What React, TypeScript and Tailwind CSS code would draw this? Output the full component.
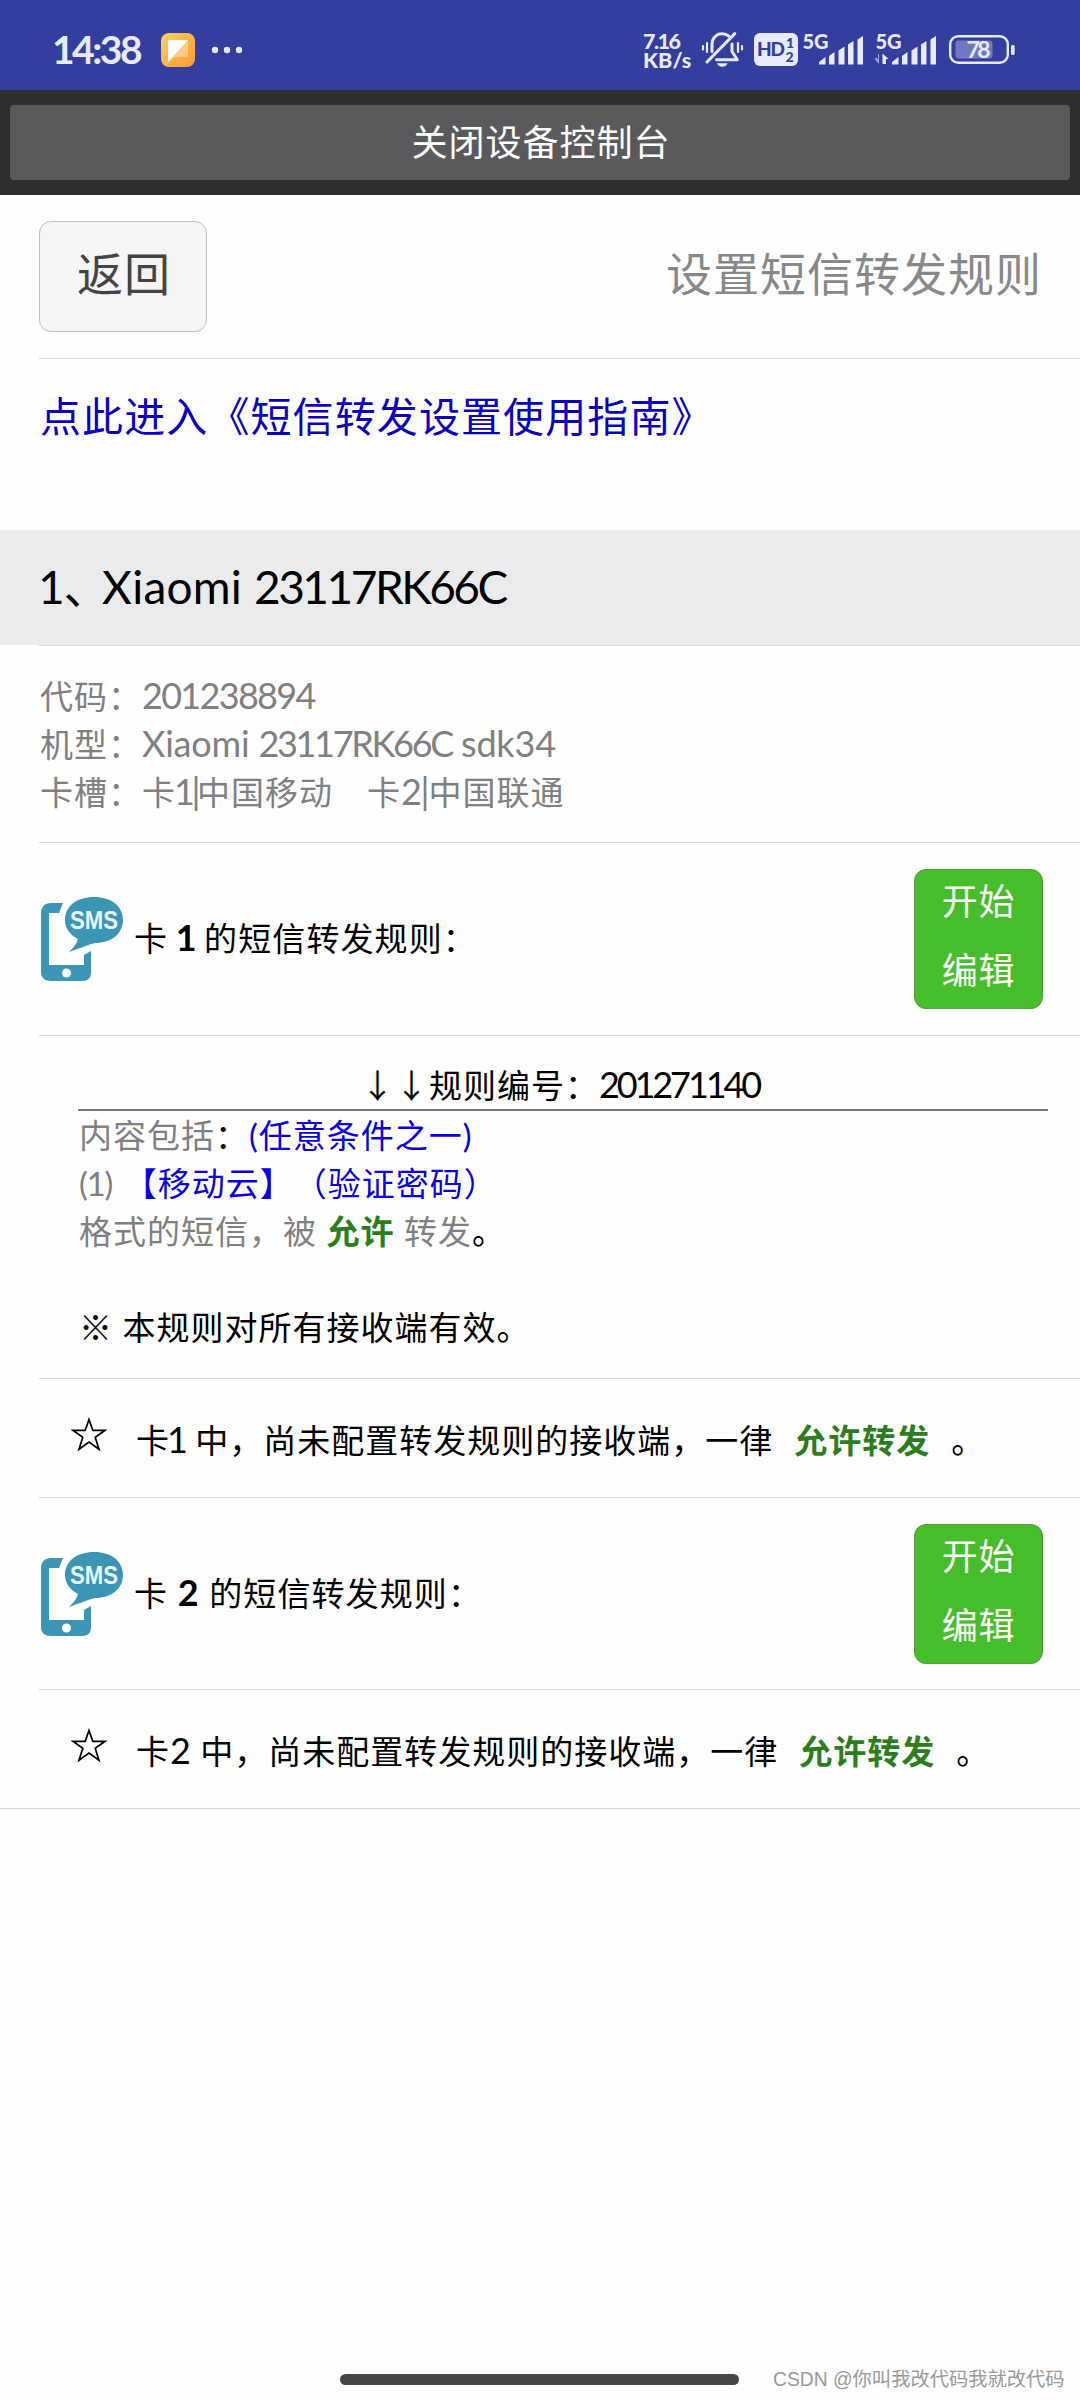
import React from 'react';

const BellOffIcon = () => (
  <svg width="43" height="38" viewBox="0 0 43 38" fill="none" stroke="#e6eafc" strokeWidth="3" strokeLinecap="round" strokeLinejoin="round">
    <path d="M11 20.5V13.5C11 7 15.5 2.8 21 2.8C23.6 2.8 26 3.6 27.8 5.2" />
    <path d="M33.8 2.6L6 31" />
    <path d="M31 13V20.5L36.3 28.8H15.5" />
    <path d="M2 15V18.5M6 12V21M37 12V21M41 15V18.5" strokeWidth="2.2" />
    <path d="M15.8 32.2H26.6C25.6 34.6 23.6 35.8 21.2 35.8C18.8 35.8 16.8 34.6 15.8 32.2Z" fill="#e6eafc" stroke="none" />
  </svg>
);

const HdIcon = () => (
  <svg width="44" height="33" viewBox="0 0 44 33">
    <rect width="44" height="33" rx="6" fill="#e6eafc" />
    <g fill="#343e9f" fontFamily="Lato, sans-serif" fontWeight="900">
      <text x="3" y="23" fontSize="19" textLength="28">HD</text>
      <text x="32" y="14.5" fontSize="14">1</text>
      <text x="31.5" y="29" fontSize="14">2</text>
    </g>
  </svg>
);

const SignalIcon = ({ active = false }: { active?: boolean }) => (
  <svg className="overflow-visible" width="62" height="32" viewBox="0 0 62 32" fill="#e6eafc">
    <text x="0.5" y="14.5" fontSize="20" fontFamily="Lato, sans-serif" fontWeight="900" textLength="26">5G</text>
    {active && (
      <>
        <path d="M4 20V30L-0.5 24.5L1 23.5L3 25.5V20Z" opacity=".6" />
        <path d="M7.5 19.5L13.5 25H11V30H7.5Z" />
      </>
    )}
    <path d="M17 30.5V28L23.5 23V30.5ZM27 30.5V22L32.5 18V30.5ZM36.5 30.5V16.5L42.5 12.5V30.5ZM46 30.5V10.5L51.5 7V30.5ZM55.5 30.5V5.5L61 2V30.5Z" />
  </svg>
);

const BatteryIcon = () => (
  <svg width="66" height="30" viewBox="0 0 66 30">
    <rect x="1.2" y="1.2" width="57.6" height="26.6" rx="8" fill="none" stroke="#e6eafc" strokeWidth="2.4" />
    <rect x="6.5" y="5.5" width="37" height="18" rx="3" fill="#7078c0" />
    <rect x="62" y="10" width="3.6" height="10" rx="1.5" fill="#e6eafc" />
    <text x="17.5" y="23" fontSize="23" fontFamily="Lato, sans-serif" fontWeight="700" fill="#e6eafc" textLength="24">78</text>
  </svg>
);

const SmsIcon = () => (
  <svg className="overflow-visible" width="82" height="84" viewBox="0 0 82 84">
    <path d="M10 6H22L18 16H8V68H43V58L50 54V75C50 81 47 84 41 84H10C4 84 0 81 0 75V16C0 10 4 6 10 6Z" fill="#3b96b5" />
    <circle cx="25.5" cy="76" r="4.5" fill="#fff" />
    <path d="M53 0C70 0 82 9 82 23C82 37 70 46 54 46C46 48 37 52 28 55C33 50 36 46 37 42C29 38 24 31 24 23C24 9 36 0 53 0Z" fill="#3b96b5" />
    <text x="29" y="32" fontSize="26" fontFamily="Liberation Sans, sans-serif" fontWeight="700" fill="#e8f6fb" textLength="48" lengthAdjust="spacingAndGlyphs">SMS</text>
  </svg>
);

const StarIcon = () => (
  <svg width="36" height="35" viewBox="0 0 36 35" fill="none" stroke="#000" strokeWidth="1.7">
    <path d="M18 2.5L21.8 13.3H34L24.2 20.3L28 32.3L18 25L8 32.3L11.8 20.3L2 13.3H14.2Z" />
  </svg>
);

const StatusBar = () => (
  <div className="flex h-[90px] items-start bg-[#343e9f] pl-[52px] text-[#e6eafc]">
    <span className="mt-[25px] w-[109px] text-[39px] leading-[48px] font-bold tracking-[-2.5px]">14:38</span>
    <svg className="mt-[33px]" width="34" height="34" viewBox="0 0 34 34">
      <defs>
        <linearGradient id="note" x1="0" y1="0" x2="1" y2="1">
          <stop offset="0" stopColor="#fbd063" />
          <stop offset="1" stopColor="#fb9a35" />
        </linearGradient>
      </defs>
      <rect width="34" height="34" rx="8" fill="url(#note)" />
      <path d="M7 7H27V24H13L7 29Z" fill="#fff" opacity=".35" />
      <path d="M7 7H27L7 29Z" fill="#fff" />
    </svg>
    <svg className="mt-[45px] ml-4" width="32" height="10" viewBox="0 0 32 10" fill="#e6eafc">
      <circle cx="4" cy="5" r="3.2" />
      <circle cx="16" cy="5" r="3.2" />
      <circle cx="28" cy="5" r="3.2" />
    </svg>
    <div className="mt-[32px] ml-[400px] w-[58px] text-[21.5px] leading-[18.5px] font-black">
      <div className="tracking-[-1.5px]">7.16</div>
      <div className="tracking-[0.1px]">KB/s</div>
    </div>
    <div className="mt-[31px] w-[53px]"><BellOffIcon /></div>
    <div className="mt-[33px] w-[48px]"><HdIcon /></div>
    <div className="mt-[34px] w-[73px]"><SignalIcon /></div>
    <div className="mt-[34px] w-[74px]"><SignalIcon active /></div>
    <div className="mt-[35px]"><BatteryIcon /></div>
  </div>
);

const CardHeader = ({ slot }: { slot: number }) => (
  <div className="flex h-full items-center pl-0.5">
    <SmsIcon />
    <div className="-mt-1 ml-[11px] flex-1 text-[33px] tracking-[1.1px]">
      卡 <b className={slot === 1 ? '-ml-0.5 text-[36px] tracking-[-2px]' : 'text-[36px]'}>{slot}</b> 的短信转发规则：
    </div>
    <button className="mr-[37px] h-[140px] w-[129px] rounded-xl border border-[#4c9f30] bg-[#46bd2b] pb-3 text-[36px] leading-[69px] tracking-[0.8px] text-white">
      <span className="-mt-[3px] block">
        开始
        <br />
        编辑
      </span>
    </button>
  </div>
);

const DefaultRule = ({ slot }: { slot: number }) => (
  <div className="flex h-full items-center pl-8 text-[33px] tracking-[1px] whitespace-pre">
    <div className="-mt-2"><StarIcon /></div>
    <div className="ml-[29px] pt-0.5">
      卡<span className={slot === 1 ? '-ml-[3px] text-[36px] tracking-[-2px]' : 'text-[36px] tracking-[0px]'}>{slot}</span> 中，尚未配置转发规则的接收端，一律
      <b className="mx-[21px] text-[#2c7d1c]">允许转发</b>。
    </div>
  </div>
);

const App: React.FC = () => {
  return (
    <div className="flex h-[2400px] w-[1080px] flex-col overflow-hidden bg-[#fefefe] font-['Lato','Noto_Sans_CJK_SC',sans-serif] text-black [text-spacing-trim:space-all]">
      <StatusBar />
      <div className="h-[105px] bg-[#2e2e2e] px-2.5 py-[15px]">
        <div className="flex h-[75px] items-center justify-center rounded bg-[#5a5a5c] pb-0.5 pl-0.5 text-[36px] tracking-[1px] text-white">
          关闭设备控制台
        </div>
      </div>

      <div className="ml-[39px] flex h-[164px] items-center justify-between border-b border-[#d9d9db] pr-[38px]">
        <button className="h-[111px] w-[168px] rounded-xl border border-[#c0c0c2] bg-[#f5f5f5] pb-1.5 pl-0.5 text-[46px] tracking-[1px] text-[#444]">返回</button>
        <h1 className="pb-1.5 text-[46px] tracking-[1px] text-[#888]">设置短信转发规则</h1>
      </div>

      <a className="ml-[39px] h-[171px] pt-[27px] pl-px text-[41px] leading-[62px] tracking-[1.1px] text-[#0a00bd]">
        点此进入《短信转发设置使用指南》
      </a>

      <div className="h-[115px] bg-[#eaebed] pt-[24px] pl-[38px] text-[46px] leading-[66px] tracking-[-1.3px]">
        1、<span className="-ml-[6px] tracking-[0.2px]">Xiaomi </span>
        <span className="tracking-[-2.5px]">23117RK66C</span>
      </div>

      <div className="ml-[39px] h-[198px] border-y border-[#d6d7d9] pt-[26px] pl-px text-[33px] tracking-[1px] whitespace-pre text-[#808080]">
        <div className="h-12 leading-[48px]">代码：<span className="text-[36px] leading-none tracking-[-1.7px]">201238894</span></div>
        <div className="h-12 leading-[48px]">
          机型：<span className="text-[36px] leading-none tracking-[-0.2px]">Xiaomi <span className="tracking-[-2.3px]">23117RK66C</span> sdk34</span>
        </div>
        <div className="h-12 leading-[48px]">
          卡槽：卡<span className="-ml-0.5 text-[36px] leading-none tracking-[-3.5px]">1|</span>中国移动　卡<span className="text-[36px] leading-none tracking-[-1.2px]">2|</span>中国联通
        </div>
      </div>

      <div className="ml-[39px] h-[193px] border-b border-[#d6d7d9]">
        <CardHeader slot={1} />
      </div>

      <div className="ml-[39px] h-[343px] border-b border-[#d6d7d9] pt-[25px] pr-8 pl-[39px] text-[33px] leading-[48px] tracking-[1px] whitespace-pre">
        <div className="h-[50px] border-b-2 border-[#777] pr-1.5 text-center">
          <span className="font-['Noto_Sans_CJK_SC'] leading-none">↓↓</span>规则编号：<span className="text-[36px] leading-none tracking-[-3.1px]">201271140</span>
        </div>
        <div className="pl-px text-[#808080]">
          <div>内容包括<span className="text-black">：</span><span className="text-[#0a00e0]">(任意条件之一)</span></div>
          <div><span className="tracking-[-1.2px]">(1)  </span><span className="-ml-[3px] text-[#0a00e0]">【移动云】（验证密码）</span></div>
          <div>格式的短信，被 <b className="text-[#2c7d1c]">允许</b> 转发<span className="text-black">。</span></div>
          <div className="mt-12 text-black">※ 本规则对所有接收端有效。</div>
        </div>
      </div>

      <div className="ml-[39px] h-[119px] border-b border-[#d6d7d9]">
        <DefaultRule slot={1} />
      </div>
      <div className="ml-[39px] h-[192px] border-b border-[#d6d7d9]">
        <CardHeader slot={2} />
      </div>
      <div className="h-[119px] border-b border-[#d6d7d9] pl-[39px]">
        <DefaultRule slot={2} />
      </div>

      <div className="mt-auto flex h-10 items-center pl-[340px]">
        <div className="-mt-px h-[11px] w-[399px] rounded-full bg-[#474747]" />
        <div className="ml-[34px] font-['Liberation_Sans','Noto_Sans_CJK_SC',sans-serif] text-[19.3px] leading-10 whitespace-nowrap text-[#999]">
          CSDN @你叫我改代码我就改代码
        </div>
      </div>
    </div>
  );
};

export default App;
